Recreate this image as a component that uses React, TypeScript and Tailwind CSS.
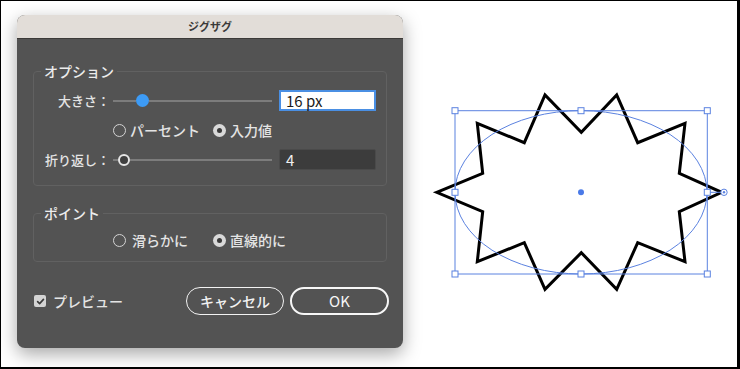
import React from 'react';

const jp = { fontFamily: '"Noto Sans CJK JP", "Noto Sans", sans-serif' };

function Radio({ checked }: { checked?: boolean }) {
  if (checked) {
    return (
      <span className="flex h-[13px] w-[13px] shrink-0 items-center justify-center rounded-full bg-[#d9d9d9]">
        <span className="h-[5px] w-[5px] rounded-full bg-[#3a3a3a]" />
      </span>
    );
  }
  return <span className="h-[13px] w-[13px] shrink-0 rounded-full border-[1.5px] border-[#d4d4d4]" />;
}

function Option({ checked, label, width }: { checked?: boolean; label: string; width?: string }) {
  return (
    <div className={`flex items-center gap-[4px] ${width ?? ''}`}>
      <Radio checked={checked} />
      <span>{label}</span>
    </div>
  );
}

export default function App() {
  return (
    <div
      className="flex h-[369px] w-[740px] items-start overflow-hidden border-t border-l border-r-[3px] border-b-2 border-black bg-white"
      style={jp}
    >
      {/* dialog */}
      <div className="ml-[16px] mt-[14px] w-[386px] overflow-hidden rounded-[8px] bg-[#535353] shadow-[0_6px_18px_rgba(0,0,0,0.35)]">
        <div className="flex h-[24px] items-center justify-center border-b border-[#3c3a38] bg-[#e2ddd8] text-[11px] font-bold text-[#3a3a3a]">
          ジグザグ
        </div>

        <div className="px-[16px] pb-[33px] pt-[25px] text-[13px] font-medium leading-[18px] text-[#e4e4e4]">
          <fieldset className="rounded-[4px] border border-[#616161] pb-[15px] pl-0 pr-[9px]">
            <legend className="ml-[7px] px-[3px] text-[14px] leading-[14px] text-[#ececec]">オプション</legend>

            <div className="mt-[12px] flex h-[21px] items-center">
              <div className="w-[76px] text-right">大きさ：</div>
              <div className="ml-[3px] flex w-[159px] items-center">
                <span className="h-[2px] w-[23px] bg-[#7c7c7c]" />
                <span className="h-[13px] w-[13px] shrink-0 rounded-full bg-[#3d9bf5]" />
                <span className="h-[2px] flex-1 bg-[#7c7c7c]" />
              </div>
              <div className="ml-[7px] flex h-[21px] w-[97px] items-center border-2 border-[#4a8fe3] bg-white pl-[5px] text-[15px] font-normal text-[#1a1a1a]">
                16 px
              </div>
            </div>

            <div className="mt-[10px] flex h-[18px] items-center pl-[79px] text-[14px]">
              <Option label="パーセント" width="w-[100px]" />
              <Option checked label="入力値" />
            </div>

            <div className="mt-[10px] flex h-[21px] items-center">
              <div className="w-[76px] text-right">折り返し：</div>
              <div className="ml-[3px] flex w-[159px] items-center">
                <span className="h-[2px] w-[5px] bg-[#7c7c7c]" />
                <span className="h-[12px] w-[12px] shrink-0 rounded-full border-2 border-[#e6e6e6] bg-[#3f3f3f]" />
                <span className="h-[2px] flex-1 bg-[#7c7c7c]" />
              </div>
              <div className="ml-[7px] flex h-[21px] w-[97px] items-center rounded-[2px] border border-[#4a4a4a] bg-[#3c3c3c] pl-[6px] text-[15px] font-normal text-[#f0f0f0]">
                4
              </div>
            </div>
          </fieldset>

          <fieldset className="mt-[20px] rounded-[4px] border border-[#616161] pb-[12px] pl-0">
            <legend className="ml-[7px] px-[3px] text-[14px] leading-[14px] text-[#ececec]">ポイント</legend>
            <div className="mt-[11px] flex h-[18px] items-center pl-[79px] text-[14px]">
              <Option label="滑らかに" width="w-[100px] gap-[6px]" />
              <Option checked label="直線的に" />
            </div>
          </fieldset>

          <div className="mt-[25px] flex h-[28px] items-center">
            <span className="ml-[1px] flex h-[12px] w-[12px] items-center justify-center rounded-[2px] bg-[#d4d4d4]">
              <svg width="9" height="9" viewBox="0 0 10 10">
                <path d="M1.8 5.2 L4 7.4 L8.3 2.6" fill="none" stroke="#3a3a3a" strokeWidth="1.8" strokeLinecap="round" strokeLinejoin="round" />
              </svg>
            </span>
            <span className="ml-[7px] text-[14px]">プレビュー</span>
            <div className="ml-auto mr-[-2px] flex gap-[6px]">
              <button className="flex h-[28px] w-[98px] items-center justify-center rounded-full border-[1.5px] border-[#f2f2f2] text-[14px] text-[#f2f2f2]">
                キャンセル
              </button>
              <button className="flex h-[28px] w-[99px] items-center justify-center rounded-full border-[2.5px] border-[#f7f7f7] text-[15px] font-normal text-[#f7f7f7]">
                OK
              </button>
            </div>
          </div>
        </div>
      </div>

      {/* artboard */}
      <svg className="ml-auto shrink-0" width="305" height="366" viewBox="432 1 305 366">
        <polygon
          points="436.7,192.3 482.7,173.3 477.3,123.3 524.3,142.7 545,95 581.3,132.3 616.7,95 637.7,142.7 685,123.3 679.3,173.3 721.7,192.3 679.3,211.7 685,261.7 637.7,242.7 616.7,289.3 581.3,252.7 545,289.3 524.3,242.7 477.3,261.7 482.7,211.7"
          fill="none"
          stroke="#000"
          strokeWidth="3"
          strokeLinejoin="miter"
        />
        <ellipse cx="581" cy="192.3" rx="126" ry="81.7" fill="none" stroke="#5b82e0" strokeWidth="1" />
        <rect x="455" y="110.7" width="252.3" height="163.3" fill="none" stroke="#5b82e0" strokeWidth="1" />
        <line x1="707.3" y1="192.3" x2="721" y2="192.3" stroke="#5b82e0" strokeWidth="1" />
        <circle cx="724" cy="192.3" r="3.2" fill="#fff" stroke="#5b82e0" strokeWidth="1" />
        <circle cx="724" cy="192.3" r="1.2" fill="#5b82e0" />
        {[
          [455, 110.7],
          [581, 110.7],
          [707.3, 110.7],
          [455, 192.3],
          [707.3, 192.3],
          [455, 274],
          [581, 274],
          [707.3, 274],
        ].map(([x, y]) => (
          <rect key={`${x}-${y}`} x={x - 3} y={y - 3} width="6" height="6" fill="#fff" stroke="#5b82e0" strokeWidth="1" />
        ))}
        <circle cx="581" cy="192.3" r="3" fill="#4a7ae8" />
      </svg>
    </div>
  );
}
